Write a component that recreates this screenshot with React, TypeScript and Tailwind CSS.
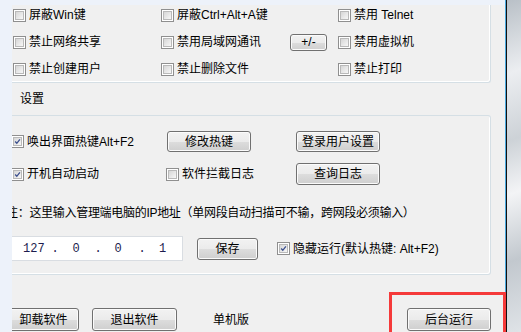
import React from 'react'

const btn =
  'flex items-center justify-center rounded-[3px] border border-[#707070] bg-[linear-gradient(to_bottom,#f2f2f2_0%,#ebebeb_50%,#dddddd_51%,#cfcfcf_100%)] shadow-[inset_0_0_0_1px_#fbfbfb] text-[12px] leading-none text-black'

function Box({ checked = false }: { checked?: boolean }) {
  return (
    <div className="flex h-[13px] w-[13px] shrink-0 items-center justify-center border border-[#8f8f8f] bg-white p-[1px]">
      <div className="relative h-full w-full border border-[#b9b9b9] bg-[linear-gradient(135deg,#d6d6d6,#f7f7f7)]">
        {checked && (
          <svg viewBox="0 0 9 9" className="absolute inset-0 h-full w-full">
            <path d="M1.5 4.6 L3.6 6.8 L7.6 1.8" fill="none" stroke="#3b4f8e" strokeWidth="1.7" />
          </svg>
        )}
      </div>
    </div>
  )
}

function Check({ label, checked, className = '' }: { label: React.ReactNode; checked?: boolean; className?: string }) {
  return (
    <div className={`flex items-center gap-[3px] text-[12px] leading-none whitespace-nowrap ${className}`}>
      <Box checked={checked} />
      <span>{label}</span>
    </div>
  )
}

export default function App() {
  return (
    <div className="relative flex h-[332px] w-[521px] overflow-hidden bg-[#f0f0f0] font-['Liberation_Sans','Noto_Sans_CJK_SC',sans-serif] text-black">
      {/* left strip */}
      <div className="w-[12px] shrink-0 bg-[#edf2fa]" />

      {/* dialog body */}
      <div className="flex w-[493px] shrink-0 flex-col overflow-hidden">
        <div className="h-[5px] shrink-0 bg-[#edf2fa]" />

        {/* group 1 */}
        <div className="mr-[14px] rounded-br-[3px] border-r border-b border-[#d5dfe5] pb-[3px] shadow-[inset_-1px_-1px_0_#fff]">
          <div className="grid h-[20px] grid-cols-[148px_129px_48px_1fr] items-center pl-[1px]">
            <Check label="屏蔽Win键" />
            <Check label="屏蔽Ctrl+Alt+A键" />
            <div />
            <Check label="禁用 Telnet" />
          </div>
          <div className="mt-[7px] grid h-[20px] grid-cols-[148px_129px_48px_1fr] items-center pl-[1px]">
            <Check label="禁止网络共享" />
            <Check label="禁用局域网通讯" />
            <div className={`${btn} h-[17px] w-[37px] rounded-[2px]`}>+/-</div>
            <Check label="禁用虚拟机" />
          </div>
          <div className="mt-[7px] grid h-[20px] grid-cols-[148px_129px_48px_1fr] items-center pl-[1px]">
            <Check label="禁止创建用户" />
            <Check label="禁止删除文件" />
            <div />
            <Check label="禁止打印" />
          </div>
        </div>

        {/* section label */}
        <div className="flex h-[32px] shrink-0 items-center pl-[8px] text-[12px] leading-none">设置</div>

        {/* group 2 */}
        <div className="mr-[14px] rounded-r-[3px] border-t border-r border-b border-[#d5dfe5] pb-[13px] shadow-[inset_-1px_-1px_0_#fff]">
          <div className="mt-[15px] grid h-[21px] grid-cols-[155px_129px_84px] items-center">
            <Check checked label="唤出界面热键Alt+F2" className="-ml-[1px]" />
            <div className={`${btn} h-[21px] w-[84px]`}>修改热键</div>
            <div className={`${btn} h-[21px] w-[84px] border-[#3c7fb1] shadow-[inset_0_0_0_1px_#a6dcf7]`}>登录用户设置</div>
          </div>
          <div className="mt-[11px] grid h-[22px] grid-cols-[155px_129px_84px] items-center">
            <Check checked label="开机自动启动" className="-ml-[1px]" />
            <Check label="软件拦截日志" className="-ml-[1px]" />
            <div className={`${btn} h-[22px] w-[84px]`}>查询日志</div>
          </div>
          <div className="mt-[20px] -ml-[6px] h-[16px] text-[12px] leading-[16px] tracking-[-0.3px] whitespace-nowrap">
            注：这里输入管理端电脑的IP地址（单网段自动扫描可不输，跨网段必须输入）
          </div>
          <div className="mt-[15px] flex h-[25px] items-center">
            <div className="flex h-[25px] w-[171px] items-center border-y border-r border-[#d9dde2] bg-white font-['Liberation_Mono',monospace] text-[12px] leading-none text-[#1c1c4e]">
              <span className="ml-[11px] w-[20px] text-center">127</span>
              <span className="w-[24px] text-center">.</span>
              <span className="w-[18px] text-center">0</span>
              <span className="w-[26px] text-center">.</span>
              <span className="w-[14px] text-center">0</span>
              <span className="w-[34px] text-center">.</span>
              <span className="w-[6px] text-center">1</span>
            </div>
            <div className={`${btn} ml-[14px] h-[22px] w-[61px]`}>保存</div>
            <Check checked label="隐藏运行(默认热键: Alt+F2)" className="ml-[19px]" />
          </div>
        </div>

        {/* bottom buttons */}
        <div className="mt-[33px] flex h-[23px] items-center">
          <div className={`${btn} -ml-[4px] h-[23px] w-[71px]`}>卸载软件</div>
          <div className={`${btn} ml-[13px] h-[23px] w-[85px]`}>退出软件</div>
          <span className="ml-[36px] text-[12px] leading-none">单机版</span>
          <div className={`${btn} mr-[14px] ml-auto h-[23px] w-[84px]`}>后台运行</div>
        </div>
      </div>

      {/* window frame */}
      <div className="flex flex-1">
        <div className="w-px bg-[#4aa9de]" />
        <div className="w-px bg-[#111]" />
        <div className="flex-1 bg-[linear-gradient(160deg,#b9c0c7_0%,#eceef1_22%,#cdd2d7_42%,#f3f4f6_58%,#c2c8ce_78%,#dfe3e7_100%)]" />
      </div>

      {/* annotation */}
      <div className="pointer-events-none absolute top-[292px] left-[389px] h-[50px] w-[117px] border-[3px] border-[#f53a3a]" />
    </div>
  )
}
